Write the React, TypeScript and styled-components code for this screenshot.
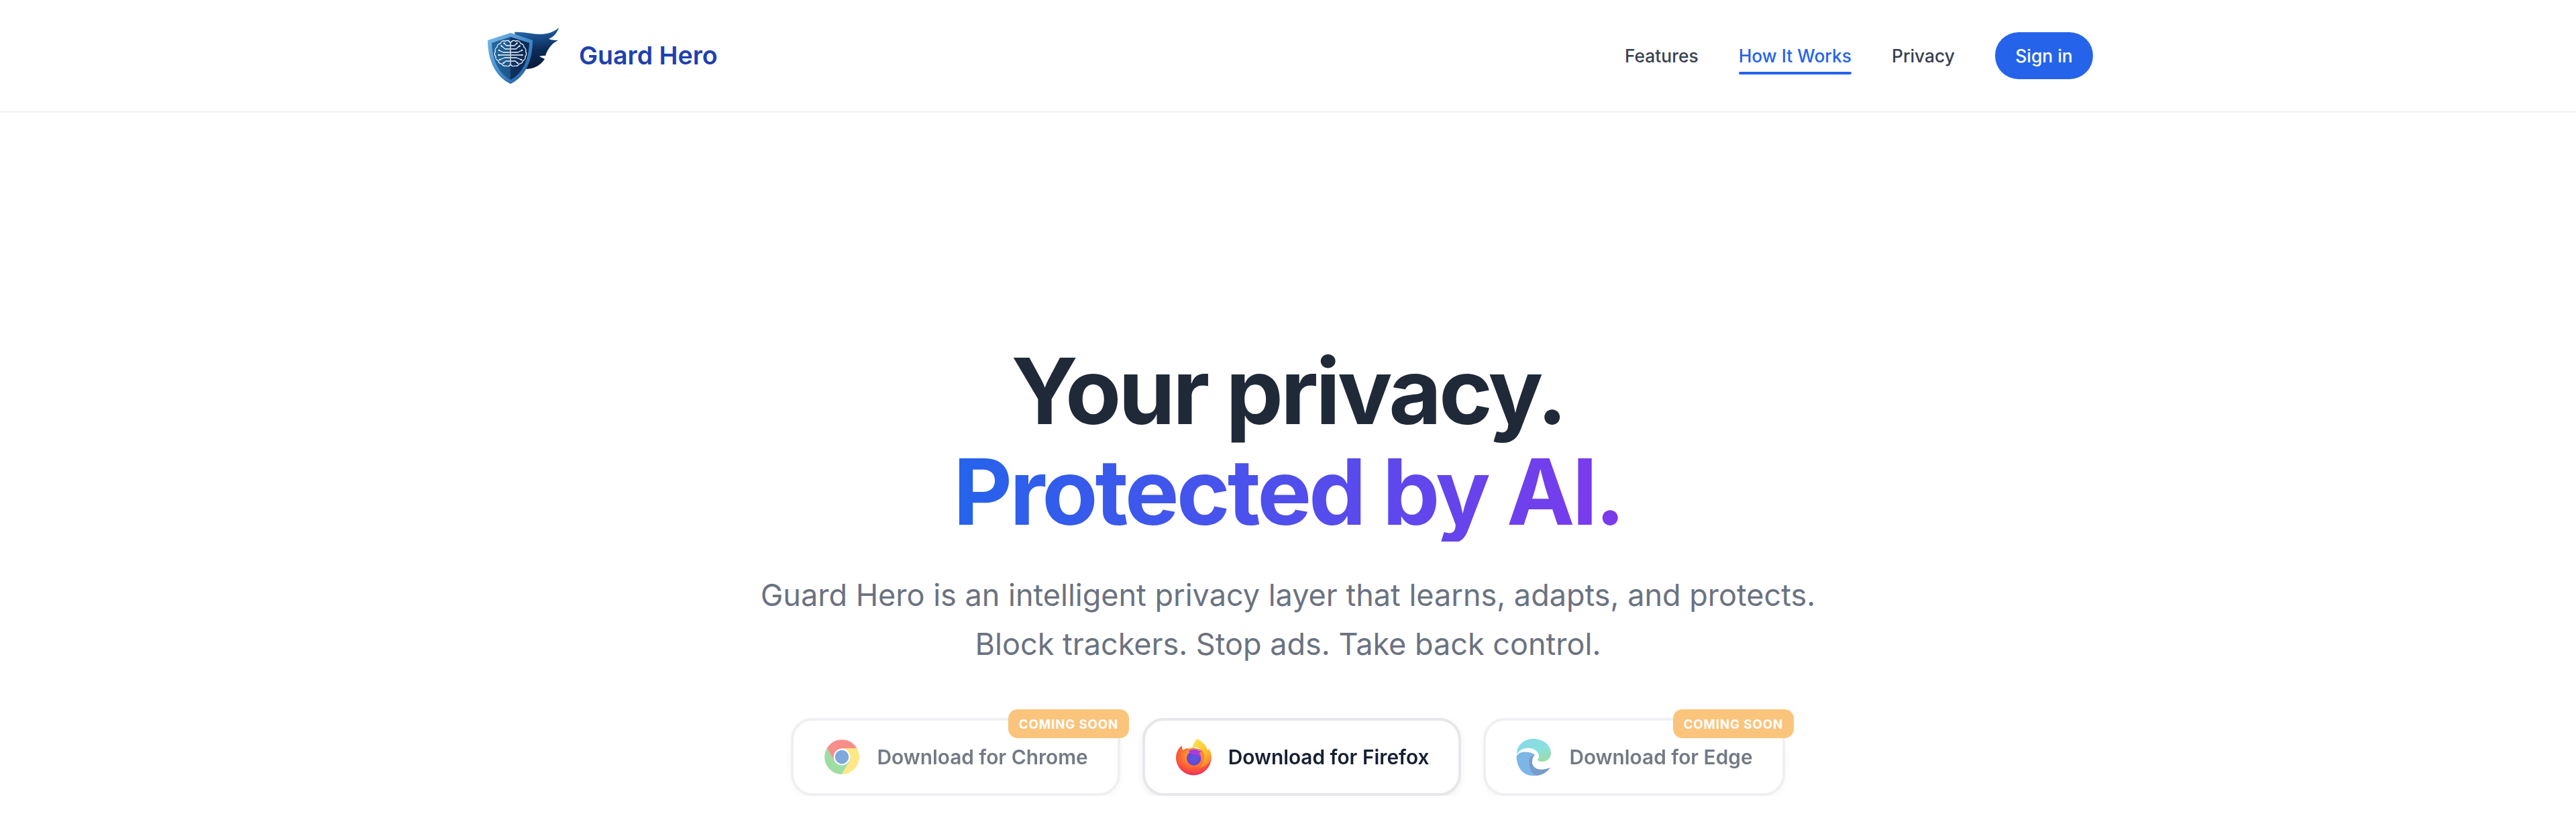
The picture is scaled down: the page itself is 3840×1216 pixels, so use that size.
import React from 'react';
import styled, { createGlobalStyle } from 'styled-components';

const Global = createGlobalStyle`
  html, body { margin: 0; padding: 0; background: #fff; }
  body { font-family: Inter, "Noto Sans", sans-serif; overflow: hidden; }
  * { box-sizing: border-box; }
`;

const Header = styled.header`
  height: 168px;
  border-bottom: 3px solid #f3f4f6;
  background: #fff;
`;
const HeaderInner = styled.div`
  width: 2400px;
  height: 165px;
  margin: 0 auto;
  display: flex;
  align-items: center;
  justify-content: space-between;
`;
const Brand = styled.a`
  display: flex;
  align-items: center;
  gap: 23px;
`;
const BrandName = styled.span`
  font-size: 37.5px;
  font-weight: 600;
  color: #1e40af;
`;
const Nav = styled.nav`
  display: flex;
  align-items: center;
  gap: 60px;
`;
const NavLink = styled.a<{ $active?: boolean }>`
  position: relative;
  font-size: 26.4px;
  font-weight: 500;
  line-height: 40px;
  color: ${p => (p.$active ? '#2563eb' : '#374151')};
  ${p =>
    p.$active &&
    `&::after { content: ''; position: absolute; left: 0; right: 0; bottom: -8px; height: 4px; border-radius: 2px; background: #2563eb; }`}
`;
const SignIn = styled.button`
  width: 146px;
  height: 70px;
  border: 0;
  border-radius: 35px;
  background: #2563eb;
  color: #fff;
  font: 500 26.4px Inter, sans-serif;
`;
const Hero = styled.main`
  display: flex;
  flex-direction: column;
  align-items: center;
  padding-top: 340px;
`;
const Title = styled.h1`
  margin: 0;
  font-size: 136px;
  line-height: 1.1;
  font-weight: 700;
  letter-spacing: -0.03em;
  color: #1f2937;
  text-align: center;
`;
const Gradient = styled.span`
  display: inline-block;
  background: linear-gradient(90deg, #2563eb, #7c3aed);
  -webkit-background-clip: text;
  background-clip: text;
  color: transparent;
`;
const Sub = styled.p`
  margin: 43px 0 0;
  font-size: 45px;
  line-height: 73px;
  font-weight: 400;
  color: #6b7280;
  text-align: center;
`;
const Buttons = styled.div`
  margin-top: 74px;
  display: flex;
  gap: 33px;
`;
const DownloadButton = styled.a<{ $disabled?: boolean }>`
  position: relative;
  height: 116px;
  padding: 0 44px;
  display: flex;
  align-items: center;
  gap: 24px;
  background: #fff;
  border: 4px solid #e5e7eb;
  border-radius: 32px;
  box-shadow: 0 4px 12px rgba(0, 0, 0, 0.06);
  font-size: 29.8px;
  font-weight: 600;
  color: #172033;
  opacity: ${p => (p.$disabled ? 0.6 : 1)};
`;
const Badge = styled.span`
  position: absolute;
  top: -17px;
  right: -17px;
  height: 43px;
  padding: 0 15.5px;
  display: flex;
  align-items: center;
  border-radius: 14px;
  background: #f89d26;
  color: #fff;
  font-size: 18.6px;
  font-weight: 700;
  letter-spacing: 0.05em;
`;
const IconSvg = styled.svg`
  width: 56px;
  height: 56px;
  flex: none;
`;

function Logo() {
  const Half = (
    <g fill="none" stroke="#f2f7fc" strokeWidth="1.300" strokeLinecap="round" strokeLinejoin="round">
      <path d="M40 26A4 4 0 0 0 33.500 24.500A5 5 0 0 0 26 28A5 5 0 0 0 21 33.500A5 5 0 0 0 18.500 40A5 5 0 0 0 19 47A5 5 0 0 0 22.500 53A5 5 0 0 0 28 58A5 5 0 0 0 34.500 61A4 4 0 0 0 40 60" />
      <path d="M40 31H35L31.500 27.500M40 36H33L27.500 31.500M40 41H30L24 38M40 45H23.500M40 49H32L25 52M40 54H34L30.500 57" />
      <g fill="#f2f7fc" stroke="none">
        <circle cx="31.500" cy="27.500" r="1.200" />
        <circle cx="27.500" cy="31.500" r="1.200" />
        <circle cx="24" cy="38" r="1.200" />
        <circle cx="23.500" cy="45" r="1.200" />
        <circle cx="25" cy="52" r="1.200" />
        <circle cx="30.500" cy="57" r="1.200" />
      </g>
    </g>
  );
  return (
    <svg width="120" height="92" viewBox="0 0 120 92" role="img" aria-label="Guard Hero logo">
      <defs>
        <linearGradient id="wing" x1="0.2" y1="0" x2="0.35" y2="1">
          <stop offset="0" stopColor="#2f73b5" />
          <stop offset="0.3" stopColor="#174a85" />
          <stop offset="0.6" stopColor="#0c2a55" />
          <stop offset="1" stopColor="#071a38" />
        </linearGradient>
        <linearGradient id="rim" x1="0" y1="0" x2="1" y2="1">
          <stop offset="0" stopColor="#7bbbea" />
          <stop offset="0.6" stopColor="#3d84c6" />
          <stop offset="1" stopColor="#174f90" />
        </linearGradient>
        <linearGradient id="face" x1="0" y1="0" x2="1" y2="0">
          <stop offset="0" stopColor="#246a9f" />
          <stop offset="0.5" stopColor="#1c5488" />
          <stop offset="0.5" stopColor="#0f2f5f" />
          <stop offset="1" stopColor="#0d2a55" />
        </linearGradient>
      </defs>
      <path
        d="M47 11C60 10 72 14 85 14C97 14 107 10 113 4C111 12 105 18 98 21C103 23 108 23 112 23C104 27 97 34 93 46C89 46 86 46 84 47L92 51C86 60 76 66 62 66L50 30Z"
        fill="url(#wing)"
      />
      <path d="M41 12L74 23C74 55 62 78 41 88C20 78 7 55 7 23Z" fill="url(#rim)" />
      <path d="M41 18L69 27C68 54 58 73 41 82C24 73 14 54 13 27Z" fill="url(#face)" />
      {Half}
      <g transform="translate(82 0) scale(-1 1)">{Half}</g>
      <path d="M41 25V61" stroke="#f2f7fc" strokeWidth="1.300" />
    </svg>
  );
}

function ChromeIcon() {
  return (
    <IconSvg viewBox="-2 -2 52 52" aria-hidden="true">
      <path d="M44.78 12A24 24 0 0 0 3.22 12L13.6 30L24 24V12Z" fill="#f4433c" />
      <path d="M3.22 12A24 24 0 0 0 24 48L34.4 30L24 24L13.6 30Z" fill="#5ec768" />
      <path d="M24 48A24 24 0 0 0 44.78 12H24V24L34.4 30Z" fill="#ffd83a" />
      <circle cx="24" cy="24" r="11.500" fill="#fff" />
      <circle cx="24" cy="24" r="9.500" fill="#2a6fc4" />
    </IconSvg>
  );
}

function FirefoxIcon() {
  return (
    <IconSvg viewBox="0 0 56 56" aria-hidden="true">
      <defs>
        <radialGradient id="ffBody" cx="0.5" cy="0.35" r="0.72">
          <stop offset="0" stopColor="#ffc02e" />
          <stop offset="0.62" stopColor="#ff5a36" />
          <stop offset="1" stopColor="#e81f6b" />
        </radialGradient>
        <linearGradient id="ffFlame" x1="0.2" y1="0" x2="0.7" y2="1">
          <stop offset="0" stopColor="#ffe14d" />
          <stop offset="0.55" stopColor="#ffc22e" />
          <stop offset="1" stopColor="#ff7d2e" />
        </linearGradient>
        <radialGradient id="ffGlobe" cx="0.5" cy="0.5" r="0.6">
          <stop offset="0" stopColor="#5a5ce0" />
          <stop offset="1" stopColor="#6a3fd0" />
        </radialGradient>
      </defs>
      <path
        d="M2 29C2 22 5 16 10.700 10.700C10.500 14 11.300 16.500 13 18C14.500 16.300 16.500 15.200 18.500 15C21 16 24 15.500 27 14L44 18C50 22 54.600 24 54.600 29A26.300 26.300 0 0 1 2 29Z"
        fill="url(#ffBody)"
      />
      <path
        d="M33 .7C31 5 27 9 26.500 14C33 11.500 42 16 43.500 24C45 32 42 40 36 44C46 43 54 37 54.700 27C54.700 22 53 19 51 15.500C50.500 17 50 17.500 49 18C47 10 40 4 33 .7Z"
        fill="url(#ffFlame)"
      />
      <circle cx="28.700" cy="30" r="10.700" fill="url(#ffGlobe)" />
      <path
        d="M21 19C24 16.500 30 16 34 17.500C36 18.500 38 19.500 40 19.500C39 21 37.500 22 36.500 22C39 24.500 39.800 28 39 31C37 27 33 24.500 28 24.500C24.500 24.500 22 22.500 21 19Z"
        fill="#a93ce0"
      />
    </IconSvg>
  );
}

function EdgeIcon() {
  return (
    <IconSvg viewBox="0 0 56 56" aria-hidden="true">
      <defs>
        <linearGradient id="edgeTop" x1="0.2" y1="0" x2="0.9" y2="1">
          <stop offset="0" stopColor="#35c1d9" />
          <stop offset="0.55" stopColor="#3ecbc6" />
          <stop offset="1" stopColor="#58c85e" />
        </linearGradient>
      </defs>
      <path
        d="M1.700 24C2 10 13 1 27 1C42 1 53 11 53 22C53 30 47 35 40 35C36 35 33 34 33 32C33 31 34 31 35 29C36 26 34 21 30 18C22 12 8 14 1.700 24Z"
        fill="url(#edgeTop)"
      />
      <path
        d="M1.700 27C4 22 9 20.500 15 20.500C21 20.500 26 22 29 25C24 25 20 28 19.500 33C19 39 21 50 33 55.600C30 56 28 56 26 56C12 56 1.700 44 1.700 27Z"
        fill="#2385d8"
      />
      <path
        d="M29 25C24 25 20 28 19.500 33C19 43 25 56 33 55.800C40 55 47 51 52 44C46 46 41 47 36 46.500C29 45.500 25 41 25 35.500C25 31 26 28 29 25Z"
        fill="#1b5cab"
      />
    </IconSvg>
  );
}

export default function App() {
  return (
    <>
      <Global />
      <Header>
        <HeaderInner>
          <Brand>
            <Logo />
            <BrandName>Guard Hero</BrandName>
          </Brand>
          <Nav>
            <NavLink>Features</NavLink>
            <NavLink $active>How It Works</NavLink>
            <NavLink>Privacy</NavLink>
            <SignIn>Sign in</SignIn>
          </Nav>
        </HeaderInner>
      </Header>
      <Hero>
        <Title>
          Your privacy.
          <br />
          <Gradient>Protected by AI.</Gradient>
        </Title>
        <Sub>
          Guard Hero is an intelligent privacy layer that learns, adapts, and protects.
          <br />
          Block trackers. Stop ads. Take back control.
        </Sub>
        <Buttons>
          <DownloadButton $disabled>
            <ChromeIcon />
            Download for Chrome
            <Badge>COMING SOON</Badge>
          </DownloadButton>
          <DownloadButton>
            <FirefoxIcon />
            Download for Firefox
          </DownloadButton>
          <DownloadButton $disabled>
            <EdgeIcon />
            Download for Edge
            <Badge>COMING SOON</Badge>
          </DownloadButton>
        </Buttons>
      </Hero>
    </>
  );
}
